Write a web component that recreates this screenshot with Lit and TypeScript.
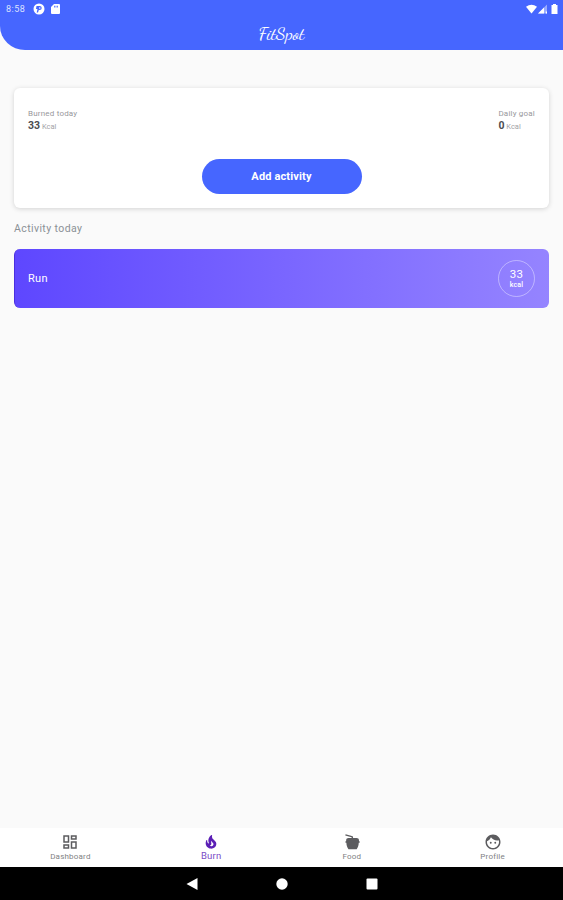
import {LitElement, html, css, svg} from 'lit';
import {customElement, property} from 'lit/decorators.js';
import {classMap} from 'lit/directives/class-map.js';

const icons = {
  dashboard: svg`<path d="M19 5v2h-4V5h4M9 5v6H5V5h4m10 8v6h-4v-6h4M9 17v2H5v-2h4M21 3h-8v6h8V3zM11 3H3v10h8V3zm10 8h-8v10h8V11zm-10 4H3v6h8v-6z"/>`,
  burn: svg`<path d="M19.480 12.350c-1.570-4.080-7.160-4.300-5.810-10.230.1-.44-.37-.78-.75-.55C9.290 3.710 6.680 8 8.870 13.620c.18.460-.36.890-.75.590-1.810-1.370-2-3.340-1.840-4.750.06-.52-.62-.77-.91-.34C4.690 10.160 4 11.840 4 14.370c.38 5.600 5.110 7.320 6.810 7.540 2.430.31 5.060-.14 6.950-1.870 2.080-1.930 2.840-5.010 1.720-7.690zm-9.280 5.030c1.440-.35 2.180-1.390 2.380-2.310.33-1.430-.96-2.830-.09-5.090.33 1.870 3.270 3.040 3.270 5.080.08 2.530-2.660 4.700-5.560 2.320z"/>`,
  food: svg`<path d="M3.500 1.500 13 4.300 13.500 6.500h4.500c2 0 3.300 1 3.300 3v1.500h.9v2H21c-.2 4-1 6-2.800 8.500H7.300C5.500 19 4.700 17 4.500 13H3.300v-2h.9V9.500c0-2 1.300-3 3.300-3h4.200l-.3-.9L3 3.200z"/>`,
  profile: svg`<path d="M12 2C6.480 2 2 6.480 2 12s4.480 10 10 10 10-4.480 10-10S17.520 2 12 2zm0 18c-4.410 0-8-3.590-8-8 0-.29.02-.58.05-.86 2.360-1.050 4.230-2.980 5.210-5.370C11.070 8.330 14.050 10 17.420 10c.78 0 1.530-.09 2.250-.26.210.71.330 1.470.330 2.260 0 4.410-3.590 8-8 8z"/><circle cx="9" cy="13" r="1.25"/><circle cx="15" cy="13" r="1.25"/>`,
};

type IconName = keyof typeof icons;

@customElement('nav-item')
export class NavItem extends LitElement {
  static styles = css`
    :host {
      flex: 1;
      display: flex;
    }
    .item {
      flex: 1;
      display: flex;
      flex-direction: column;
      align-items: center;
      padding-top: 5px;
      color: #5c5c5f;
    }
    .icon {
      width: 18px;
      height: 18px;
      fill: currentColor;
    }
    .label {
      font-size: 8px;
      line-height: 11px;
      letter-spacing: 0.2px;
      color: #818184;
    }
    .active {
      color: #5b1fb5;
    }
    .active .icon {
      width: 16px;
      height: 16px;
      padding: 1px;
    }
    .active .label {
      margin-top: -1px;
      font-size: 9.5px;
      color: #7a4ac6;
    }
  `;

  @property() icon: IconName = 'dashboard';
  @property() label = '';
  @property({type: Boolean}) active = false;

  render() {
    return html`
      <div class=${classMap({item: true, active: this.active})}>
        <svg class="icon" viewBox="0 0 24 24">${icons[this.icon]}</svg>
        <span class="label">${this.label}</span>
      </div>
    `;
  }
}

@customElement('activity-row')
export class ActivityRow extends LitElement {
  static styles = css`
    .row {
      display: flex;
      align-items: center;
      justify-content: space-between;
      box-sizing: border-box;
      height: 59px;
      padding: 0 14px 0 13px;
      border-left: 1px solid #4a2fdf;
      border-radius: 6px;
      background: linear-gradient(90deg, #5e47ff, #9584ff);
      color: #fff;
    }
    .name {
      font-size: 11px;
      letter-spacing: 0.3px;
    }
    .badge {
      display: flex;
      flex-direction: column;
      align-items: center;
      justify-content: center;
      box-sizing: border-box;
      width: 37px;
      height: 37px;
      border: 1px solid rgba(255, 255, 255, 0.4);
      border-radius: 50%;
    }
    .amount {
      font-size: 11.5px;
      line-height: 12px;
      letter-spacing: 0.3px;
    }
    .unit {
      font-size: 7px;
      font-weight: 500;
      line-height: 10px;
      letter-spacing: 0.2px;
    }
  `;

  @property() name = '';
  @property({type: Number}) kcal = 0;

  render() {
    return html`
      <div class="row">
        <span class="name">${this.name}</span>
        <div class="badge">
          <span class="amount">${this.kcal}</span>
          <span class="unit">kcal</span>
        </div>
      </div>
    `;
  }
}

@customElement('app-root')
export class AppRoot extends LitElement {
  static styles = css`
    :host {
      display: flex;
      flex-direction: column;
      height: 900px;
      background: #fafafa;
      font-family: Roboto, 'Liberation Sans', sans-serif;
    }
    .header {
      height: 50px;
      border-bottom-left-radius: 25px 24px;
      background: #4666ff;
      color: #fff;
    }
    .status {
      display: flex;
      align-items: center;
      height: 18px;
      padding: 0 4px 0 6px;
    }
    .clock {
      width: 27px;
      font-size: 9px;
      line-height: 18px;
      letter-spacing: 0.5px;
      color: #dce2ff;
    }
    .status svg {
      display: block;
      fill: #fff;
    }
    .signals {
      display: flex;
      gap: 1px;
      margin-left: auto;
    }
    .sd {
      margin-left: 6px;
    }
    .logo {
      font-family: 'Dancing Script', cursive;
      font-size: 18px;
      line-height: 30px;
      text-align: center;
    }
    .content {
      flex: 1;
      padding: 38px 14px 0 14px;
    }
    .card {
      display: flex;
      flex-direction: column;
      align-items: center;
      box-sizing: border-box;
      height: 120px;
      padding: 20px 14px 0;
      border-radius: 6px;
      background: #fff;
      box-shadow: 0 1px 5px rgba(0, 0, 0, 0.16);
    }
    .stats {
      display: flex;
      align-self: stretch;
      justify-content: space-between;
      margin-bottom: 26px;
    }
    .caption {
      font-size: 8px;
      line-height: 11px;
      letter-spacing: 0.2px;
      color: #98989c;
    }
    .value {
      font-size: 7.5px;
      line-height: 13px;
      color: #a2a2a6;
    }
    .value b {
      font-size: 10.5px;
      color: #4c4c50;
    }
    .add {
      width: 160px;
      height: 35px;
      padding: 0;
      border: none;
      border-radius: 18px;
      background: #4666ff;
      color: #fff;
      font: 700 11px Roboto, 'Liberation Sans', sans-serif;
      letter-spacing: 0.15px;
    }
    .title {
      margin: 13px 0;
      font-size: 10.5px;
      font-weight: 400;
      line-height: 15px;
      letter-spacing: 0.4px;
      color: #8b9196;
    }
    .tabs {
      display: flex;
      height: 39px;
      background: #fff;
    }
    .system {
      display: flex;
      justify-content: center;
      align-items: center;
      gap: 78px;
      height: 33px;
      background: #000;
    }
    .system svg {
      width: 12px;
      height: 12px;
      fill: #fff;
    }
  `;

  render() {
    return html`
      <header class="header">
        <div class="status">
          <span class="clock">8:58</span>
          <svg width="12" height="12" viewBox="0 0 12 12">
            <path fill-rule="evenodd" d="M6 .5a5.500 5.500 0 1 0 0 11 5.500 5.500 0 0 0 0-11zM3.500 3h3.200a2 2 0 0 1 0 4H5.800L5 9.500H3.700L4.500 6H3z"/>
            <circle cx="6.800" cy="5" r=".8"/>
          </svg>
          <svg class="sd" width="9" height="10" viewBox="0 0 9 10">
            <path fill-rule="evenodd" d="M3 0h5q1 0 1 1v8q0 1-1 1H1q-1 0-1-1V3zM3 1.800v1.700h.8V1.800zm1.600 0v1.700h.8V1.800zm1.600 0v1.700H7V1.800z"/>
          </svg>
          <div class="signals">
            <svg width="11" height="10" viewBox="0 0 11 10">
              <path d="M0 2.800Q5.500-1.200 11 2.800L5.500 9.500z"/>
            </svg>
            <svg width="10" height="10" viewBox="0 0 10 10">
              <path opacity=".45" d="M9 .5v9H0z"/>
              <path d="M6 3.500v6H0zM7.800 7.500H9v2H7.800z"/>
            </svg>
            <svg width="10" height="10" viewBox="0 0 10 10">
              <path d="M4 0h3v1h1.500v9h-6V1H4z"/>
            </svg>
          </div>
        </div>
        <div class="logo">FitSpot</div>
      </header>
      <main class="content">
        <section class="card">
          <div class="stats">
            <div>
              <div class="caption">Burned today</div>
              <div class="value"><b>33</b> Kcal</div>
            </div>
            <div>
              <div class="caption">Daily goal</div>
              <div class="value"><b>0</b> Kcal</div>
            </div>
          </div>
          <button class="add">Add activity</button>
        </section>
        <h2 class="title">Activity today</h2>
        <activity-row name="Run" kcal="33"></activity-row>
      </main>
      <nav class="tabs">
        <nav-item icon="dashboard" label="Dashboard"></nav-item>
        <nav-item icon="burn" label="Burn" active></nav-item>
        <nav-item icon="food" label="Food"></nav-item>
        <nav-item icon="profile" label="Profile"></nav-item>
      </nav>
      <footer class="system">
        <svg viewBox="0 0 12 12"><path d="M11.500 0v12L.5 6z"/></svg>
        <svg viewBox="0 0 12 12"><circle cx="6" cy="6" r="5.700"/></svg>
        <svg viewBox="0 0 12 12"><rect x=".5" y=".5" width="11" height="11" rx="1"/></svg>
      </footer>
    `;
  }
}
